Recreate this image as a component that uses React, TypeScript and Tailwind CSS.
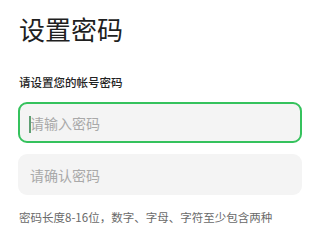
import { useState } from 'react';

const font = { fontFamily: '"Noto Sans CJK SC", "Noto Sans", sans-serif' };

function Field({ placeholder, focused }: { placeholder: string; focused?: boolean }) {
  const [value, setValue] = useState('');
  return (
    <div
      className={`relative h-[41px] rounded-[9px] bg-[#f4f4f4] border-2 ${
        focused ? 'border-[#35c25d]' : 'border-transparent'
      }`}
    >
      <input
        type="password"
        value={value}
        onChange={(e) => setValue(e.target.value)}
        placeholder={placeholder}
        className="h-full w-full bg-transparent pl-[10px] pr-3 text-[14px] text-[#222] caret-transparent outline-none placeholder:text-[#a9a9a9]"
        style={font}
      />
      {focused && value === '' && (
        <span className="absolute left-[9px] top-[11.5px] h-[17px] w-[1.5px] bg-[#5f9f74]" />
      )}
    </div>
  );
}

export default function App() {
  return (
    <div className="min-h-screen bg-white px-[18px] pt-[14px]" style={font}>
      <h1 className="pl-[1px] text-[26px] font-normal leading-[30px] text-[#1f1f1f]">设置密码</h1>
      <p className="mt-[30px] pl-[1px] text-[11.5px] font-medium leading-[16px] text-[#222]">请设置您的帐号密码</p>
      <div className="mt-[12px] flex flex-col gap-[11px]">
        <Field placeholder="请输入密码" focused />
        <Field placeholder="请确认密码" />
      </div>
      <p className="mt-[14px] pl-[1px] text-[11.5px] leading-[16px] text-[#6a6a6a]">
        密码长度8-16位，数字、字母、字符至少包含两种
      </p>
    </div>
  );
}
